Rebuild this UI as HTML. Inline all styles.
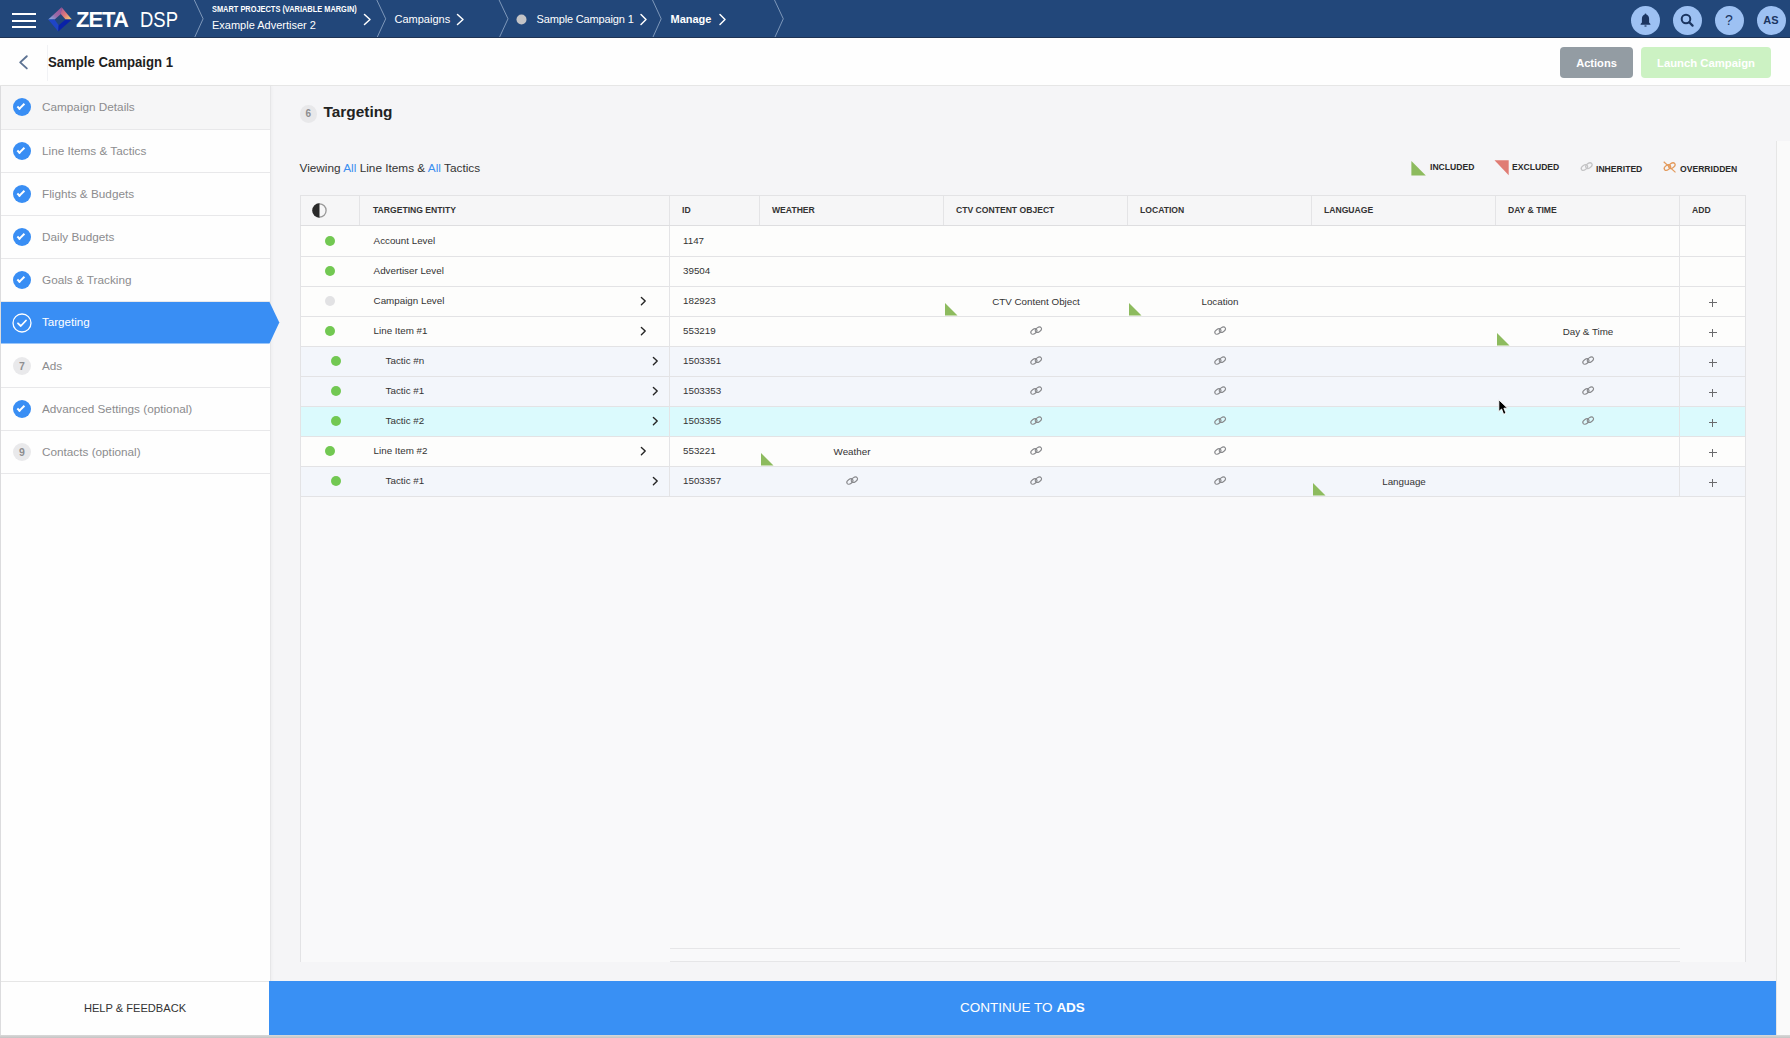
<!DOCTYPE html>
<html><head><meta charset="utf-8">
<style>
*{box-sizing:border-box;margin:0;padding:0}
html,body{width:1790px;height:1038px;overflow:hidden;background:#f5f5f7;font-family:"Liberation Sans",sans-serif;color:#333}
.abs{position:absolute}
.ic{position:absolute;top:5.6px;width:29px;height:29px;border-radius:50%;background:#9dc1f3}
#top{position:absolute;left:0;top:0;width:1790px;height:38px;background:#22477a}
#hdr{position:absolute;left:0;top:38px;width:1790px;height:48px;background:#fefefe;border-bottom:1px solid #e6e6e6}
#side{position:absolute;left:0;top:86px;width:270.5px;height:952px;background:#fefefe;border-left:1px solid #dcdcde;border-right:1px solid #e6e6e8;box-shadow:1px 0 3px rgba(0,0,0,0.035)}
.si{position:absolute;left:1px;width:269px;height:43px;border-bottom:1px solid #e8e8ea}
.si .t{position:absolute;left:41px;top:14px;font-size:11.75px;color:#8c8c8e;white-space:nowrap}
.ck{position:absolute;left:12px;top:12px;width:18px;height:18px;border-radius:50%;background:#398ef4}
.ck::after{content:"";position:absolute;left:6.3px;top:4.2px;width:4.2px;height:7.6px;border-right:2px solid #fff;border-bottom:2px solid #fff;transform:rotate(45deg);box-sizing:border-box}
.num{position:absolute;left:12px;top:12px;width:18px;height:18px;border-radius:50%;background:#e9e9eb;color:#8e8e90;font-size:10.5px;font-weight:700;text-align:center;line-height:18px}
#main{position:absolute;left:271px;top:87px;width:1505px;height:894px;background:#f5f5f7}
#rstrip{position:absolute;left:1776px;top:141px;width:14px;height:897px;background:#fafafa;border-left:1px solid #e6e6e6}
#bottom{position:absolute;left:269px;top:981px;width:1507px;height:54px;background:#3990f4;color:#fff;font-size:13.5px;text-align:center;line-height:54px}
#helpf{position:absolute;left:1px;top:981px;width:268px;height:54px;border-top:1px solid #e6e6e6;text-align:center;line-height:53px;font-size:11.1px;color:#333}
#botline{position:absolute;left:0;top:1035px;width:1790px;height:3px;background:linear-gradient(#d9d9d9,#c4c4c4)}
table{border-collapse:collapse}
.th{position:absolute;top:204px;font-size:8.6px;font-weight:700;color:#333;line-height:12px;white-space:nowrap}
.td{position:absolute;font-size:9.8px;color:#333;line-height:13px;white-space:nowrap}
.ct{position:absolute;width:180px;text-align:center;font-size:9.8px;color:#333;line-height:13px;white-space:nowrap}
.lg{position:absolute;font-size:8.6px;font-weight:700;color:#2a2a2a;line-height:12px;white-space:nowrap}

</style></head><body>
<div id="top">
 <div class="abs" style="left:12px;top:13px;width:24px;height:2.2px;background:#fff"></div>
 <div class="abs" style="left:12px;top:19.5px;width:24px;height:2.2px;background:#fff"></div>
 <div class="abs" style="left:12px;top:25.7px;width:24px;height:2.2px;background:#fff"></div>
 <svg class="abs" style="left:0;top:0" width="210" height="37" viewBox="0 0 210 37">
  <defs>
   <linearGradient id="gul" x1="0" y1="1" x2="1" y2="0"><stop offset="0" stop-color="#7fb4f0"/><stop offset="0.45" stop-color="#9a6aa6"/><stop offset="1" stop-color="#a0529a"/></linearGradient>
   <linearGradient id="gur" x1="0" y1="0" x2="1" y2="1"><stop offset="0" stop-color="#a0529a"/><stop offset="0.5" stop-color="#e07a7a"/><stop offset="1" stop-color="#f5e070"/></linearGradient>
  </defs>
  <polygon points="48.2,19.4 61.6,7.3 60.8,13.9 54.6,19.6" fill="url(#gul)"/>
  <polygon points="61.6,7.3 71.9,19.4 65.6,19.6 60.8,13.9" fill="url(#gur)"/>
  <polygon points="48.2,19.4 54.6,19.6 58.7,25.3 58.3,31.5" fill="#1f45c6"/>
  <polygon points="71.9,19.4 58.3,31.5 58.7,25.3 65.6,19.6" fill="#0a22a8"/>
  <polyline points="194.3,0 203.1,18.8 194.8,37" fill="none" stroke="#7e98ba" stroke-opacity="1" stroke-width="1"/>
 </svg>
 <div class="abs" style="left:76px;top:5px;font-size:22px;font-weight:700;color:#fff;letter-spacing:-1px;line-height:30px">ZETA</div>
 <div class="abs" style="left:139.5px;top:5px;font-size:22px;color:#fff;line-height:30px;transform:scaleX(0.84);transform-origin:0 0">DSP</div>
 <div class="abs" style="left:212px;top:3.5px;font-size:8.2px;font-weight:700;color:#fff;line-height:12px;white-space:nowrap;transform:scaleX(0.905);transform-origin:0 0">SMART PROJECTS (VARIABLE MARGIN)</div>
 <div class="abs" style="left:212px;top:17px;font-size:11px;color:#fff;line-height:16px;white-space:nowrap">Example Advertiser 2</div>
 <svg class="abs" style="left:0;top:0" width="800" height="37" viewBox="0 0 800 37">
  <g fill="none" stroke="#fff" stroke-width="1.5" stroke-linecap="round" stroke-linejoin="round">
   <polyline points="364.5,14.5 370,19.5 364.5,24.5"/>
   <polyline points="457.5,14.5 463,19.5 457.5,24.5"/>
   <polyline points="641,14.5 646,19.5 641,24.5"/>
   <polyline points="720,14.5 725,19.5 720,24.5"/>
  </g>
  <g fill="none" stroke="#7e98ba" stroke-opacity="1" stroke-width="1">
   <polyline points="376.8,0 385.7,18.8 377.3,37"/>
   <polyline points="499.1,0 508,18.8 499.6,37"/>
   <polyline points="652.5,0 661.2,18.8 653,37"/>
   <polyline points="774.5,0 783.3,18.8 775,37"/>
  </g>
  <circle cx="521.5" cy="19.5" r="5" fill="#c4c4c6"/>
 </svg>
 <div class="abs" style="left:394.5px;top:11px;font-size:11px;color:#fff;line-height:16px;white-space:nowrap">Campaigns</div>
 <div class="abs" style="left:536.5px;top:11px;font-size:11px;color:#fff;line-height:16px;white-space:nowrap;letter-spacing:-0.15px">Sample Campaign 1</div>
 <div class="abs" style="left:670.5px;top:11px;font-size:11px;font-weight:700;color:#fff;line-height:16px;white-space:nowrap">Manage</div>
 <div class="ic" style="left:1630.5px"><svg width="29" height="29" viewBox="0 0 29 29"><path d="M14.5 8.6c-2.2 0-3.6 1.8-3.6 4.2v3.6l-1.3 1.7v0.7h9.8v-0.7l-1.3-1.7v-3.6c0-2.4-1.4-4.2-3.6-4.2z" fill="#1b3561"/><circle cx="14.5" cy="8.4" r="0.9" fill="#1b3561"/><rect x="13.5" y="19.4" width="2" height="1.2" fill="#1b3561"/></svg></div>
 <div class="ic" style="left:1672.5px"><svg width="29" height="29" viewBox="0 0 29 29"><circle cx="13" cy="13" r="4.3" fill="none" stroke="#1b3561" stroke-width="2"/><line x1="16.2" y1="16.2" x2="19.6" y2="19.6" stroke="#1b3561" stroke-width="2.2" stroke-linecap="round"/></svg></div>
 <div class="ic" style="left:1714.5px;font-size:14px;color:#1b3561;text-align:center;line-height:29px">?</div>
 <div class="ic" style="left:1756.5px;font-weight:700;font-size:11px;color:#1b3561;text-align:center;line-height:29px">AS</div>
 <div class="abs" style="left:0;top:37px;width:1790px;height:1px;background:#1e3354"></div>
</div>
<div id="hdr">
 <svg class="abs" style="left:0;top:-1px" width="60" height="49"><polyline points="26.8,19.2 20.2,25.4 26.8,31.4" fill="none" stroke="#5d7393" stroke-width="1.9" stroke-linecap="round" stroke-linejoin="round"/><line x1="47.5" y1="8" x2="47.5" y2="44" stroke="#f1f2f5" stroke-width="1"/></svg>
 <div class="abs" style="left:48px;top:14.5px;font-size:14px;font-weight:700;color:#1e1e1e;line-height:18px;white-space:nowrap;transform:scaleX(0.94);transform-origin:0 0">Sample Campaign 1</div>
 <div class="abs" style="left:1560px;top:8.5px;width:73px;height:31.5px;border-radius:4px;background:#939ca3;color:#fff;font-weight:700;font-size:11.1px;text-align:center;line-height:33px">Actions</div>
 <div class="abs" style="left:1641px;top:8.5px;width:130px;height:31.5px;border-radius:4px;background:#ccf2c3;color:#fff;font-weight:700;font-size:11.3px;text-align:center;line-height:33px">Launch Campaign</div>
</div>
<div id="main"></div>
<div id="rstrip"></div>
<!--MAIN-->
<div class="abs" style="left:299.5px;top:105px;width:17.6px;height:17.6px;border-radius:50%;background:#e8e8ea;color:#8e8e90;font-size:10px;font-weight:700;text-align:center;line-height:18.4px">6</div>
<div class="abs" style="left:323.5px;top:103px;font-size:15.4px;font-weight:700;color:#222;line-height:18px;white-space:nowrap">Targeting</div>
<div class="abs" style="left:299.5px;top:161px;font-size:11.8px;color:#333;line-height:14px;white-space:nowrap">Viewing <span style="color:#3b8ff0">All</span> Line Items &amp; <span style="color:#3b8ff0">All</span> Tactics</div>
<svg class="abs" style="left:1400px;top:150px" width="300" height="30">
 <polygon points="11.4,10.9 11.4,25.6 25.8,25.6" fill="#8dbb5e"/>
 <polygon points="94.5,10.2 108.7,10.2 108.7,25.2" fill="#e07c74"/>
</svg>
<div class="lg" style="left:1430px;top:161px">INCLUDED</div>
<div class="lg" style="left:1512px;top:161px">EXCLUDED</div>
<svg class="abs" style="left:1579px;top:161px" width="15" height="12" viewBox="0 0 14 12"><g fill="none" stroke="#c4c4c6" stroke-width="1.25"><ellipse cx="4.9" cy="6.5" rx="3.5" ry="2.3" transform="rotate(-36 4.9 6.5)"/><ellipse cx="9.4" cy="4.7" rx="3.5" ry="2.3" transform="rotate(-36 9.4 4.7)"/></g></svg>
<div class="lg" style="left:1596px;top:162.5px">INHERITED</div>
<svg class="abs" style="left:1662px;top:161px" width="15" height="12" viewBox="0 0 14 12"><g fill="none" stroke="#e39a5c" stroke-width="1.25"><ellipse cx="4.9" cy="6.5" rx="3.5" ry="2.3" transform="rotate(-36 4.9 6.5)"/><ellipse cx="9.4" cy="4.7" rx="3.5" ry="2.3" transform="rotate(-36 9.4 4.7)"/></g><line x1="1.2" y1="0.8" x2="13" y2="11.4" stroke="#e39a5c" stroke-width="1.2"/></svg>
<div class="lg" style="left:1680px;top:162.5px">OVERRIDDEN</div>
<!--TABLE-->
<div class="abs" style="left:300px;top:195px;width:1446px;height:767px;background:#f9f9fa;border-left:1px solid #e3e3e5;border-right:1px solid #e3e3e5;border-top:1px solid #e3e3e5"></div>
<div class="abs" style="left:301px;top:196px;width:1444px;height:29px;background:#f6f6f7"></div>
<div class="abs" style="left:300px;top:225px;width:1446px;height:1px;background:#dedee0"></div>
<div class="abs" style="left:359px;top:196px;width:1px;height:29px;background:#e4e4e6"></div>
<div class="abs" style="left:669px;top:196px;width:1px;height:29px;background:#e4e4e6"></div>
<div class="abs" style="left:759px;top:196px;width:1px;height:29px;background:#e4e4e6"></div>
<div class="abs" style="left:943px;top:196px;width:1px;height:29px;background:#e4e4e6"></div>
<div class="abs" style="left:1127px;top:196px;width:1px;height:29px;background:#e4e4e6"></div>
<div class="abs" style="left:1311px;top:196px;width:1px;height:29px;background:#e4e4e6"></div>
<div class="abs" style="left:1495px;top:196px;width:1px;height:29px;background:#e4e4e6"></div>
<div class="abs" style="left:1679px;top:196px;width:1px;height:29px;background:#e4e4e6"></div>
<div class="th" style="left:373px">TARGETING ENTITY</div>
<div class="th" style="left:682px">ID</div>
<div class="th" style="left:772px">WEATHER</div>
<div class="th" style="left:956px">CTV CONTENT OBJECT</div>
<div class="th" style="left:1140px">LOCATION</div>
<div class="th" style="left:1324px">LANGUAGE</div>
<div class="th" style="left:1508px">DAY &amp; TIME</div>
<div class="th" style="left:1692px">ADD</div>
<svg class="abs" style="left:311px;top:202px" width="17" height="17"><circle cx="8.5" cy="8.5" r="6.6" fill="none" stroke="#9a9a9a" stroke-width="1.3"/><path d="M8.5 1.3 A7.2 7.2 0 0 0 8.5 15.7 Z" fill="#2a2a2a"/></svg>
<div class="abs" style="left:301px;top:226px;width:1444px;height:30px;background:#fdfdfc"></div>
<div class="abs" style="left:325.3px;top:236px;width:10px;height:10px;border-radius:50%;background:#72c852"></div>
<div class="td" style="left:373.6px;top:233.5px">Account Level</div>
<div class="td" style="left:683px;top:233.5px">1147</div>
<div class="abs" style="left:301px;top:256px;width:1444px;height:30px;background:#fdfdfc"></div>
<div class="abs" style="left:325.3px;top:266px;width:10px;height:10px;border-radius:50%;background:#72c852"></div>
<div class="td" style="left:373.6px;top:263.5px">Advertiser Level</div>
<div class="td" style="left:683px;top:263.5px">39504</div>
<div class="abs" style="left:301px;top:286px;width:1444px;height:30px;background:#fdfdfc"></div>
<div class="abs" style="left:325.3px;top:296px;width:10px;height:10px;border-radius:50%;background:#e2e2e4"></div>
<div class="td" style="left:373.6px;top:293.5px">Campaign Level</div>
<div class="td" style="left:683px;top:293.5px">182923</div>
<svg class="abs" style="left:639.6px;top:295.5px" width="8" height="11"><polyline points="1.4,1.5 5.2,5.1 1.4,8.8" fill="none" stroke="#262626" stroke-width="1.4" stroke-linecap="round" stroke-linejoin="round"/></svg>
<svg class="abs" style="left:945px;top:302.5px" width="13" height="13"><polygon points="0,0 0,12.5 12.5,12.5" fill="#8dbb5e"/></svg>
<div class="ct" style="left:946px;top:295px">CTV Content Object</div>
<svg class="abs" style="left:1129px;top:302.5px" width="13" height="13"><polygon points="0,0 0,12.5 12.5,12.5" fill="#8dbb5e"/></svg>
<div class="ct" style="left:1130px;top:295px">Location</div>
<div class="abs" style="left:1708.5px;top:301.6px;width:8px;height:1.8px;background:#6a6a6c"></div><div class="abs" style="left:1711.6px;top:298.5px;width:1.8px;height:8px;background:#6a6a6c"></div>
<div class="abs" style="left:301px;top:316px;width:1444px;height:30px;background:#fdfdfc"></div>
<div class="abs" style="left:325.3px;top:326px;width:10px;height:10px;border-radius:50%;background:#72c852"></div>
<div class="td" style="left:373.6px;top:323.5px">Line Item #1</div>
<div class="td" style="left:683px;top:323.5px">553219</div>
<svg class="abs" style="left:639.6px;top:325.5px" width="8" height="11"><polyline points="1.4,1.5 5.2,5.1 1.4,8.8" fill="none" stroke="#262626" stroke-width="1.4" stroke-linecap="round" stroke-linejoin="round"/></svg>
<svg class="abs" style="left:1029px;top:325px" width="14" height="12" viewBox="0 0 14 12"><g fill="none" stroke="#88898c" stroke-width="1.1"><ellipse cx="4.9" cy="6.5" rx="3.4" ry="2.2" transform="rotate(-36 4.9 6.5)"/><ellipse cx="9.4" cy="4.7" rx="3.4" ry="2.2" transform="rotate(-36 9.4 4.7)"/></g></svg>
<svg class="abs" style="left:1213px;top:325px" width="14" height="12" viewBox="0 0 14 12"><g fill="none" stroke="#88898c" stroke-width="1.1"><ellipse cx="4.9" cy="6.5" rx="3.4" ry="2.2" transform="rotate(-36 4.9 6.5)"/><ellipse cx="9.4" cy="4.7" rx="3.4" ry="2.2" transform="rotate(-36 9.4 4.7)"/></g></svg>
<svg class="abs" style="left:1497px;top:332.5px" width="13" height="13"><polygon points="0,0 0,12.5 12.5,12.5" fill="#8dbb5e"/></svg>
<div class="ct" style="left:1498px;top:325px">Day &amp; Time</div>
<div class="abs" style="left:1708.5px;top:331.6px;width:8px;height:1.8px;background:#6a6a6c"></div><div class="abs" style="left:1711.6px;top:328.5px;width:1.8px;height:8px;background:#6a6a6c"></div>
<div class="abs" style="left:301px;top:346px;width:1444px;height:30px;background:#f3f6fb"></div>
<div class="abs" style="left:331.3px;top:356px;width:10px;height:10px;border-radius:50%;background:#72c852"></div>
<div class="td" style="left:385.6px;top:353.5px">Tactic #n</div>
<div class="td" style="left:683px;top:353.5px">1503351</div>
<svg class="abs" style="left:651.6px;top:355.5px" width="8" height="11"><polyline points="1.4,1.5 5.2,5.1 1.4,8.8" fill="none" stroke="#262626" stroke-width="1.4" stroke-linecap="round" stroke-linejoin="round"/></svg>
<svg class="abs" style="left:1029px;top:355px" width="14" height="12" viewBox="0 0 14 12"><g fill="none" stroke="#88898c" stroke-width="1.1"><ellipse cx="4.9" cy="6.5" rx="3.4" ry="2.2" transform="rotate(-36 4.9 6.5)"/><ellipse cx="9.4" cy="4.7" rx="3.4" ry="2.2" transform="rotate(-36 9.4 4.7)"/></g></svg>
<svg class="abs" style="left:1213px;top:355px" width="14" height="12" viewBox="0 0 14 12"><g fill="none" stroke="#88898c" stroke-width="1.1"><ellipse cx="4.9" cy="6.5" rx="3.4" ry="2.2" transform="rotate(-36 4.9 6.5)"/><ellipse cx="9.4" cy="4.7" rx="3.4" ry="2.2" transform="rotate(-36 9.4 4.7)"/></g></svg>
<svg class="abs" style="left:1581px;top:355px" width="14" height="12" viewBox="0 0 14 12"><g fill="none" stroke="#88898c" stroke-width="1.1"><ellipse cx="4.9" cy="6.5" rx="3.4" ry="2.2" transform="rotate(-36 4.9 6.5)"/><ellipse cx="9.4" cy="4.7" rx="3.4" ry="2.2" transform="rotate(-36 9.4 4.7)"/></g></svg>
<div class="abs" style="left:1708.5px;top:361.6px;width:8px;height:1.8px;background:#6a6a6c"></div><div class="abs" style="left:1711.6px;top:358.5px;width:1.8px;height:8px;background:#6a6a6c"></div>
<div class="abs" style="left:301px;top:376px;width:1444px;height:30px;background:#f3f6fb"></div>
<div class="abs" style="left:331.3px;top:386px;width:10px;height:10px;border-radius:50%;background:#72c852"></div>
<div class="td" style="left:385.6px;top:383.5px">Tactic #1</div>
<div class="td" style="left:683px;top:383.5px">1503353</div>
<svg class="abs" style="left:651.6px;top:385.5px" width="8" height="11"><polyline points="1.4,1.5 5.2,5.1 1.4,8.8" fill="none" stroke="#262626" stroke-width="1.4" stroke-linecap="round" stroke-linejoin="round"/></svg>
<svg class="abs" style="left:1029px;top:385px" width="14" height="12" viewBox="0 0 14 12"><g fill="none" stroke="#88898c" stroke-width="1.1"><ellipse cx="4.9" cy="6.5" rx="3.4" ry="2.2" transform="rotate(-36 4.9 6.5)"/><ellipse cx="9.4" cy="4.7" rx="3.4" ry="2.2" transform="rotate(-36 9.4 4.7)"/></g></svg>
<svg class="abs" style="left:1213px;top:385px" width="14" height="12" viewBox="0 0 14 12"><g fill="none" stroke="#88898c" stroke-width="1.1"><ellipse cx="4.9" cy="6.5" rx="3.4" ry="2.2" transform="rotate(-36 4.9 6.5)"/><ellipse cx="9.4" cy="4.7" rx="3.4" ry="2.2" transform="rotate(-36 9.4 4.7)"/></g></svg>
<svg class="abs" style="left:1581px;top:385px" width="14" height="12" viewBox="0 0 14 12"><g fill="none" stroke="#88898c" stroke-width="1.1"><ellipse cx="4.9" cy="6.5" rx="3.4" ry="2.2" transform="rotate(-36 4.9 6.5)"/><ellipse cx="9.4" cy="4.7" rx="3.4" ry="2.2" transform="rotate(-36 9.4 4.7)"/></g></svg>
<div class="abs" style="left:1708.5px;top:391.6px;width:8px;height:1.8px;background:#6a6a6c"></div><div class="abs" style="left:1711.6px;top:388.5px;width:1.8px;height:8px;background:#6a6a6c"></div>
<div class="abs" style="left:301px;top:406px;width:1444px;height:30px;background:#dbfafd"></div>
<div class="abs" style="left:331.3px;top:416px;width:10px;height:10px;border-radius:50%;background:#72c852"></div>
<div class="td" style="left:385.6px;top:413.5px">Tactic #2</div>
<div class="td" style="left:683px;top:413.5px">1503355</div>
<svg class="abs" style="left:651.6px;top:415.5px" width="8" height="11"><polyline points="1.4,1.5 5.2,5.1 1.4,8.8" fill="none" stroke="#262626" stroke-width="1.4" stroke-linecap="round" stroke-linejoin="round"/></svg>
<svg class="abs" style="left:1029px;top:415px" width="14" height="12" viewBox="0 0 14 12"><g fill="none" stroke="#88898c" stroke-width="1.1"><ellipse cx="4.9" cy="6.5" rx="3.4" ry="2.2" transform="rotate(-36 4.9 6.5)"/><ellipse cx="9.4" cy="4.7" rx="3.4" ry="2.2" transform="rotate(-36 9.4 4.7)"/></g></svg>
<svg class="abs" style="left:1213px;top:415px" width="14" height="12" viewBox="0 0 14 12"><g fill="none" stroke="#88898c" stroke-width="1.1"><ellipse cx="4.9" cy="6.5" rx="3.4" ry="2.2" transform="rotate(-36 4.9 6.5)"/><ellipse cx="9.4" cy="4.7" rx="3.4" ry="2.2" transform="rotate(-36 9.4 4.7)"/></g></svg>
<svg class="abs" style="left:1581px;top:415px" width="14" height="12" viewBox="0 0 14 12"><g fill="none" stroke="#88898c" stroke-width="1.1"><ellipse cx="4.9" cy="6.5" rx="3.4" ry="2.2" transform="rotate(-36 4.9 6.5)"/><ellipse cx="9.4" cy="4.7" rx="3.4" ry="2.2" transform="rotate(-36 9.4 4.7)"/></g></svg>
<div class="abs" style="left:1708.5px;top:421.6px;width:8px;height:1.8px;background:#6a6a6c"></div><div class="abs" style="left:1711.6px;top:418.5px;width:1.8px;height:8px;background:#6a6a6c"></div>
<div class="abs" style="left:301px;top:436px;width:1444px;height:30px;background:#fdfdfc"></div>
<div class="abs" style="left:325.3px;top:446px;width:10px;height:10px;border-radius:50%;background:#72c852"></div>
<div class="td" style="left:373.6px;top:443.5px">Line Item #2</div>
<div class="td" style="left:683px;top:443.5px">553221</div>
<svg class="abs" style="left:639.6px;top:445.5px" width="8" height="11"><polyline points="1.4,1.5 5.2,5.1 1.4,8.8" fill="none" stroke="#262626" stroke-width="1.4" stroke-linecap="round" stroke-linejoin="round"/></svg>
<svg class="abs" style="left:761px;top:452.5px" width="13" height="13"><polygon points="0,0 0,12.5 12.5,12.5" fill="#8dbb5e"/></svg>
<div class="ct" style="left:762px;top:445px">Weather</div>
<svg class="abs" style="left:1029px;top:445px" width="14" height="12" viewBox="0 0 14 12"><g fill="none" stroke="#88898c" stroke-width="1.1"><ellipse cx="4.9" cy="6.5" rx="3.4" ry="2.2" transform="rotate(-36 4.9 6.5)"/><ellipse cx="9.4" cy="4.7" rx="3.4" ry="2.2" transform="rotate(-36 9.4 4.7)"/></g></svg>
<svg class="abs" style="left:1213px;top:445px" width="14" height="12" viewBox="0 0 14 12"><g fill="none" stroke="#88898c" stroke-width="1.1"><ellipse cx="4.9" cy="6.5" rx="3.4" ry="2.2" transform="rotate(-36 4.9 6.5)"/><ellipse cx="9.4" cy="4.7" rx="3.4" ry="2.2" transform="rotate(-36 9.4 4.7)"/></g></svg>
<div class="abs" style="left:1708.5px;top:451.6px;width:8px;height:1.8px;background:#6a6a6c"></div><div class="abs" style="left:1711.6px;top:448.5px;width:1.8px;height:8px;background:#6a6a6c"></div>
<div class="abs" style="left:301px;top:466px;width:1444px;height:30px;background:#f3f6fb"></div>
<div class="abs" style="left:331.3px;top:476px;width:10px;height:10px;border-radius:50%;background:#72c852"></div>
<div class="td" style="left:385.6px;top:473.5px">Tactic #1</div>
<div class="td" style="left:683px;top:473.5px">1503357</div>
<svg class="abs" style="left:651.6px;top:475.5px" width="8" height="11"><polyline points="1.4,1.5 5.2,5.1 1.4,8.8" fill="none" stroke="#262626" stroke-width="1.4" stroke-linecap="round" stroke-linejoin="round"/></svg>
<svg class="abs" style="left:845px;top:475px" width="14" height="12" viewBox="0 0 14 12"><g fill="none" stroke="#88898c" stroke-width="1.1"><ellipse cx="4.9" cy="6.5" rx="3.4" ry="2.2" transform="rotate(-36 4.9 6.5)"/><ellipse cx="9.4" cy="4.7" rx="3.4" ry="2.2" transform="rotate(-36 9.4 4.7)"/></g></svg>
<svg class="abs" style="left:1029px;top:475px" width="14" height="12" viewBox="0 0 14 12"><g fill="none" stroke="#88898c" stroke-width="1.1"><ellipse cx="4.9" cy="6.5" rx="3.4" ry="2.2" transform="rotate(-36 4.9 6.5)"/><ellipse cx="9.4" cy="4.7" rx="3.4" ry="2.2" transform="rotate(-36 9.4 4.7)"/></g></svg>
<svg class="abs" style="left:1213px;top:475px" width="14" height="12" viewBox="0 0 14 12"><g fill="none" stroke="#88898c" stroke-width="1.1"><ellipse cx="4.9" cy="6.5" rx="3.4" ry="2.2" transform="rotate(-36 4.9 6.5)"/><ellipse cx="9.4" cy="4.7" rx="3.4" ry="2.2" transform="rotate(-36 9.4 4.7)"/></g></svg>
<svg class="abs" style="left:1313px;top:482.5px" width="13" height="13"><polygon points="0,0 0,12.5 12.5,12.5" fill="#8dbb5e"/></svg>
<div class="ct" style="left:1314px;top:475px">Language</div>
<div class="abs" style="left:1708.5px;top:481.6px;width:8px;height:1.8px;background:#6a6a6c"></div><div class="abs" style="left:1711.6px;top:478.5px;width:1.8px;height:8px;background:#6a6a6c"></div>
<div class="abs" style="left:300px;top:256px;width:1446px;height:1px;background:#e3e3e5"></div>
<div class="abs" style="left:300px;top:286px;width:1446px;height:1px;background:#e3e3e5"></div>
<div class="abs" style="left:300px;top:316px;width:1446px;height:1px;background:#e3e3e5"></div>
<div class="abs" style="left:300px;top:346px;width:1446px;height:1px;background:#e3e3e5"></div>
<div class="abs" style="left:300px;top:376px;width:1446px;height:1px;background:#e3e3e5"></div>
<div class="abs" style="left:300px;top:406px;width:1446px;height:1px;background:#e3e3e5"></div>
<div class="abs" style="left:300px;top:436px;width:1446px;height:1px;background:#e3e3e5"></div>
<div class="abs" style="left:300px;top:466px;width:1446px;height:1px;background:#e3e3e5"></div>
<div class="abs" style="left:300px;top:496px;width:1446px;height:1px;background:#e3e3e5"></div>
<div class="abs" style="left:669px;top:226px;width:1px;height:270px;background:#e4e4e6"></div>
<div class="abs" style="left:1679px;top:226px;width:1px;height:270px;background:#e4e4e6"></div>
<div class="abs" style="left:670px;top:948px;width:1010px;height:1px;background:#e6e6e8"></div>
<div class="abs" style="left:670px;top:961px;width:1010px;height:1px;background:#e6e6e8"></div>
<svg class="abs" style="left:1490px;top:392px" width="25" height="28" viewBox="1490 392 25 28"><path d="M1498.8 399.8 L1498.8 411.6 L1501.6 409.0 L1503.6 414.3 L1506.0 413.3 L1503.9 408.2 L1507.6 408.2 Z" fill="#000" stroke="#fff" stroke-width="0.9" stroke-linejoin="round"/></svg>
<!--/TABLE-->
<!--/MAIN-->

<div id="side"></div>
<div class="si" style="top:86px;height:44px;background:#f6f6f7"><div class="ck"></div><div class="t">Campaign Details</div></div>
<div class="si" style="top:130px"><div class="ck"></div><div class="t">Line Items &amp; Tactics</div></div>
<div class="si" style="top:173px"><div class="ck"></div><div class="t">Flights &amp; Budgets</div></div>
<div class="si" style="top:216px"><div class="ck"></div><div class="t">Daily Budgets</div></div>
<div class="si" style="top:259px"><div class="ck"></div><div class="t">Goals &amp; Tracking</div></div>
<div class="si" style="top:345px"><div class="num">7</div><div class="t">Ads</div></div>
<div class="si" style="top:388px"><div class="ck"></div><div class="t">Advanced Settings (optional)</div></div>
<div class="si" style="top:431px"><div class="num">9</div><div class="t">Contacts (optional)</div></div>
<svg class="abs" style="left:0;top:301px" width="290" height="44"><polygon points="1,1 269.5,1 279.3,21.5 269.5,42.5 1,42.5" fill="#398ef4"/><circle cx="22" cy="22" r="9" fill="none" stroke="#fff" stroke-width="1.3"/><polyline points="18,22.3 20.8,25 26,19.5" fill="none" stroke="#fff" stroke-width="1.8" stroke-linecap="round" stroke-linejoin="round"/></svg>
<div class="abs" style="left:42px;top:315px;font-size:11.6px;color:#fff;line-height:14px">Targeting</div>
<div id="helpf">HELP &amp; FEEDBACK</div>
<div id="bottom">CONTINUE TO <b>ADS</b></div>
<div id="botline"></div>
</body></html>
